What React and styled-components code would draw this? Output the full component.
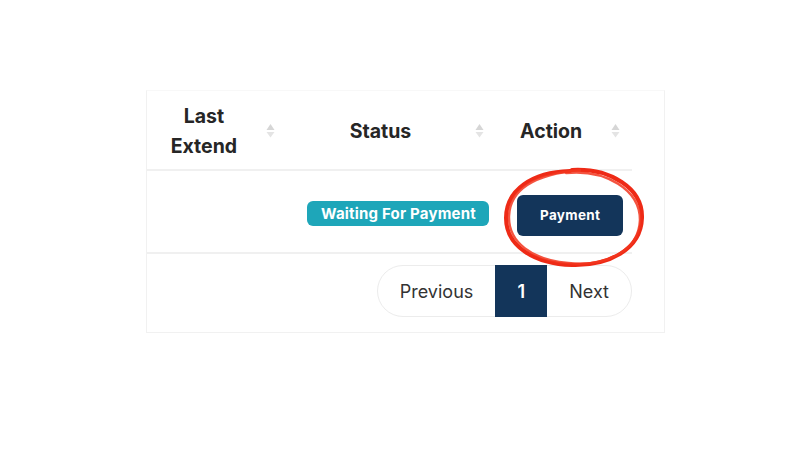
import React from 'react';
import styled, { createGlobalStyle } from 'styled-components';

const GlobalStyle = createGlobalStyle`
  html, body {
    margin: 0;
    padding: 0;
    background: #ffffff;
    font-family: Inter, "Noto Sans", sans-serif;
  }
`;

function SortIcon() {
  return (
    <SortWrap>
      <svg width="9" height="16" viewBox="0 0 9 16">
        <path d="M4.5 1 L8.5 7 L0.5 7 Z" fill="#d6d6d6" />
        <path d="M0.5 9 L8.5 9 L4.5 14.5 Z" fill="#e4e4e4" />
      </svg>
    </SortWrap>
  );
}

function Scribble() {
  return (
    <Circle width="146" height="104" viewBox="0 0 146 104">
      <path
        d="M70 4 C108 2 141 22 140 52 C139 84 106 100 70 99 C32 98 4 80 4 52 C4 24 30 6 68 5"
        fill="none"
        stroke="#ee2a16"
        strokeWidth="4"
        strokeLinecap="round"
      />
      <path
        d="M64 7 C104 3 138 24 138 54 C137 86 102 101 66 97 C30 94 6 76 7 50 C8 22 36 8 78 4"
        fill="none"
        stroke="#f2361f"
        strokeWidth="2.5"
        strokeLinecap="round"
        opacity="0.85"
      />
    </Circle>
  );
}

export default function App() {
  return (
    <Page>
      <GlobalStyle />
      <Card>
        <Table>
          <HeadRow>
            <HeadCell width={140} padLeft={14}>
              Last
              <br />
              Extend
              <SortIcon />
            </HeadCell>
            <HeadCell width={210} padLeft={18}>
              Status
              <SortIcon />
            </HeadCell>
            <HeadCell width={136} padLeft={14}>
              Action
              <SortIcon />
            </HeadCell>
          </HeadRow>
          <BodyRow>
            <BodyCell width={140} padLeft={0} />
            <BodyCell width={210} padLeft={14}>
              <Badge>Waiting For Payment</Badge>
            </BodyCell>
            <BodyCell width={136} padLeft={12}>
              <PayButton>Payment</PayButton>
            </BodyCell>
          </BodyRow>
        </Table>
        <Pager>
          <PageGroup>
            <PageLink>Previous</PageLink>
            <PageLink active>1</PageLink>
            <PageLink>Next</PageLink>
          </PageGroup>
        </Pager>
        <Scribble />
      </Card>
    </Page>
  );
}

const Page = styled.div`
  width: 800px;
  height: 450px;
  box-sizing: border-box;
  padding: 90px 0 0 146px;
`;

const Card = styled.div`
  position: relative;
  width: 519px;
  height: 243px;
  box-sizing: border-box;
  border: 1px solid #f1f1f1;
  border-top-color: #f8f8f8;
  padding-right: 32px;
`;

const Table = styled.div`
  display: flex;
  flex-direction: column;
`;

const HeadRow = styled.div`
  display: flex;
  height: 76px;
  padding-top: 2px;
  border-bottom: 2px solid #f0f0f0;
`;

const BodyRow = styled.div`
  display: flex;
  height: 81px;
  border-bottom: 2px solid #f0f0f0;
`;

const HeadCell = styled.div`
  position: relative;
  width: ${(p) => p.width}px;
  box-sizing: border-box;
  padding: 0 40px 0 ${(p) => p.padLeft}px;
  display: flex;
  align-items: center;
  justify-content: center;
  text-align: center;
  font-size: 19.5px;
  font-weight: 700;
  line-height: 30px;
  color: #262626;
`;

const SortWrap = styled.span`
  position: absolute;
  right: 12px;
  top: 50%;
  transform: translateY(-50%);
  display: flex;
`;

const BodyCell = styled.div`
  width: ${(p) => p.width}px;
  box-sizing: border-box;
  padding: 3px 0 0 ${(p) => p.padLeft}px;
  display: flex;
  align-items: center;
  justify-content: center;
`;

const Badge = styled.span`
  display: inline-flex;
  align-items: center;
  justify-content: center;
  height: 25px;
  width: 182px;
  border-radius: 6px;
  background: #1ea6b9;
  color: #ffffff;
  font-size: 15px;
  font-weight: 700;
  letter-spacing: 0.2px;
`;

const PayButton = styled.button`
  width: 106px;
  height: 41px;
  margin-top: 4px;
  border: none;
  border-radius: 6px;
  background: #13355a;
  color: #ffffff;
  font-family: Inter, "Noto Sans", sans-serif;
  font-size: 13.5px;
  font-weight: 700;
  letter-spacing: 0.3px;
`;

const Pager = styled.div`
  display: flex;
  justify-content: flex-end;
  padding-top: 11px;
`;

const PageGroup = styled.div`
  display: flex;
  height: 52px;
  border: 1px solid #ececec;
  border-radius: 26px;
  box-sizing: border-box;
`;

const PageLink = styled.div`
  display: flex;
  align-items: center;
  justify-content: center;
  height: 52px;
  margin-top: -1px;
  box-sizing: border-box;
  padding: ${(p) => (p.active ? '0' : '0 22px')};
  width: ${(p) => (p.active ? '52px' : 'auto')};
  background: ${(p) => (p.active ? '#13355a' : 'transparent')};
  color: ${(p) => (p.active ? '#ffffff' : '#333333')};
  font-size: 18px;
  font-weight: ${(p) => (p.active ? 600 : 400)};
`;

const Circle = styled.svg`
  position: absolute;
  left: 355px;
  top: 75px;
  pointer-events: none;
`;
